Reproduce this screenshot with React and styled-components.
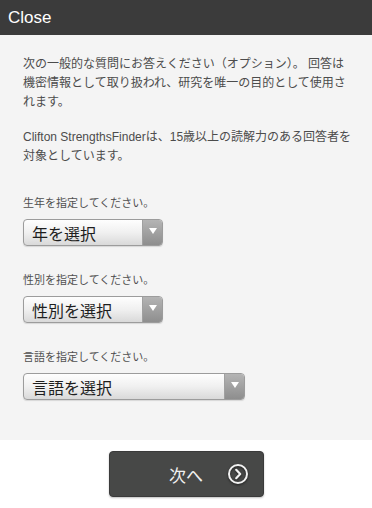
import React from "react"
import styled, { createGlobalStyle } from "styled-components"

const GlobalStyle = createGlobalStyle`
  html, body {
    margin: 0;
    padding: 0;
    background: #ffffff;
  }
  body {
    font-family: "Liberation Sans", "Noto Sans CJK JP", sans-serif;
    -webkit-font-smoothing: antialiased;
  }
`

const fields = [
  { label: "生年を指定してください。", placeholder: "年を選択", width: 140 },
  { label: "性別を指定してください。", placeholder: "性別を選択", width: 140 },
  { label: "言語を指定してください。", placeholder: "言語を選択", width: 222 },
]

const App = () => (
  <>
    <GlobalStyle />
    <Page>
      <TopBar>
        <CloseLink>Close</CloseLink>
      </TopBar>
      <Content>
        <Intro>
          次の一般的な質問にお答えください（オプション）。 回答は機密情報として取り扱われ、研究を唯一の目的として使用されます。
        </Intro>
        <Intro last>
          Clifton StrengthsFinderは、15歳以上の読解力のある回答者を対象としています。
        </Intro>
        {fields.map((f) => (
          <Field key={f.label}>
            <FieldLabel>{f.label}</FieldLabel>
            <SelectBox width={f.width}>
              <SelectText>{f.placeholder}</SelectText>
              <SelectArrow>
                <svg width="8" height="6" viewBox="0 0 8 6">
                  <path d="M0 0 L8 0 L4 6 Z" fill="#ffffff" />
                </svg>
              </SelectArrow>
            </SelectBox>
          </Field>
        ))}
      </Content>
      <Footer>
        <NextButton>
          次へ
          <NextIcon>
            <svg width="22" height="22" viewBox="0 0 22 22">
              <circle cx="11" cy="11" r="9" fill="none" stroke="#f2f2f2" strokeWidth="2" />
              <path
                d="M9.2 6.8 L13.2 11 L9.2 15.2"
                fill="none"
                stroke="#f2f2f2"
                strokeWidth="2.2"
                strokeLinecap="round"
                strokeLinejoin="round"
              />
            </svg>
          </NextIcon>
        </NextButton>
      </Footer>
    </Page>
  </>
)

export default App

/**
 * STYLING
 */

const Page = styled.div`
  width: 372px;
  min-height: 508px;
  display: flex;
  flex-direction: column;
  background: #ffffff;
`

const TopBar = styled.header`
  height: 35px;
  background: #3b3b3b;
  display: flex;
  align-items: center;
  padding-left: 8px;
`

const CloseLink = styled.a`
  color: #ffffff;
  font-size: 17px;
  text-decoration: none;
  cursor: pointer;
`

const Content = styled.main`
  background: #f4f4f4;
  padding: 20px 17px 14px 23px;
`

const Intro = styled.p`
  margin: 0 0 ${(p) => (p.last ? "29px" : "16px")};
  font-size: 12px;
  line-height: 19px;
  color: #4c4c4c;
`

const Field = styled.div`
  display: flex;
  flex-direction: column;
  align-items: flex-start;
  margin-bottom: 26px;
`

const FieldLabel = styled.label`
  font-size: 11px;
  line-height: 16px;
  color: #505050;
  margin-bottom: 8px;
`

const SelectBox = styled.div`
  box-sizing: border-box;
  width: ${(p) => p.width}px;
  height: 27px;
  display: flex;
  align-items: stretch;
  border: 1px solid #9c9c9c;
  border-radius: 4px;
  overflow: hidden;
  background: linear-gradient(#fefefe, #f0f0f0 50%, #d9d9d9);
  box-shadow: 0 1px 1px rgba(0, 0, 0, 0.12);
  cursor: pointer;
`

const SelectText = styled.span`
  flex: 1;
  display: flex;
  align-items: center;
  padding-left: 8px;
  font-size: 16px;
  color: #1e1e1e;
`

const SelectArrow = styled.span`
  width: 20px;
  display: flex;
  align-items: center;
  justify-content: center;
  padding-bottom: 3px;
  box-sizing: border-box;
  background: linear-gradient(#b4b4b4, #8e8e8e);
  border-left: 1px solid #a0a0a0;
`

const Footer = styled.footer`
  display: flex;
  justify-content: center;
  padding-top: 11px;
`

const NextButton = styled.button`
  position: relative;
  box-sizing: border-box;
  width: 155px;
  height: 46px;
  border: 1px solid #3a3a3a;
  border-radius: 4px;
  background: #474847;
  color: #f0f0f0;
  font-family: "Liberation Sans", "Noto Sans CJK JP", sans-serif;
  font-size: 17px;
  display: flex;
  align-items: center;
  justify-content: center;
  box-shadow: 0 1px 2px rgba(0, 0, 0, 0.25);
  cursor: pointer;
`

const NextIcon = styled.span`
  position: absolute;
  right: 14px;
  top: 50%;
  transform: translateY(-50%);
  display: flex;
  filter: drop-shadow(0 1px 1px rgba(0, 0, 0, 0.6));
`
